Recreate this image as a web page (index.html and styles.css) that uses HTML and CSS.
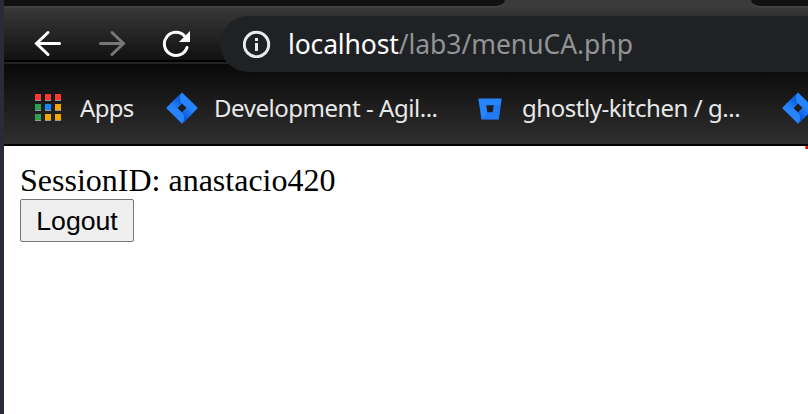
FILE: index.html
```html
<!DOCTYPE html>
<html lang="en">
<head>
<meta charset="utf-8">
<title>localhost/lab3/menuCA.php</title>
<link rel="stylesheet" href="styles.css">
</head>
<body>
<svg class="defs" aria-hidden="true">
  <defs>
    <linearGradient id="fold-a" gradientUnits="userSpaceOnUse" x1="15" y1="8" x2="7" y2="16"><stop offset="0" stop-color="#0a5ad6"/><stop offset="1" stop-color="#2684ff"/></linearGradient>
    <linearGradient id="fold-b" gradientUnits="userSpaceOnUse" x1="17" y1="24" x2="25" y2="16"><stop offset="0" stop-color="#0a5ad6"/><stop offset="1" stop-color="#2684ff"/></linearGradient>
    <symbol id="jira" viewBox="0 0 32 32">
      <path fill="#2684ff" fill-rule="evenodd" d="M16 .4 31.2 15.2Q31.8 16 31.2 16.8L16 31.8.8 16.8Q.2 16 .8 15.2ZM16 11.4 11.4 16 16 20.6 20.6 16Z"/>
      <path fill="url(#fold-a)" d="M16 .4Q11.500 5.500 16 11.4L8.300 19 4.300 11.8Z"/>
      <path fill="url(#fold-b)" d="M16 31.800Q20.500 26 16 20.600L23.700 13 27.700 20.200Z"/>
    </symbol>
  </defs>
</svg>
<div class="window">
  <div class="tabs"><div class="tab tab-left"></div><div class="tab tab-right"></div></div>
  <div class="toolbar">
    <svg class="nav" viewBox="0 0 28 28"><path d="M25.500 13.500H2.500M14 2.500 2.500 13.500 14 24.500"/></svg>
    <svg class="nav forward" viewBox="0 0 28 28"><path d="M2.500 13.500h23M14 2.500 25.500 13.500 14 24.500"/></svg>
    <svg class="nav reload" viewBox="0 0 28 28"><path d="M22.500 6A11.600 11.600 0 1 0 25 17.500"/><path class="solid" d="M28 1v11H17Z"/></svg>
    <div class="address">
      <svg class="info" viewBox="0 0 28 28"><circle cx="13.500" cy="14.500" r="12.200"/><path d="M13.500 13v8M13.500 8v3"/></svg>
      <span class="url"><b>localhost</b>/lab3/menuCA.php</span>
    </div>
  </div>
  <div class="bookmarks">
    <div class="apps"><i class="r"></i><i class="r"></i><i class="r"></i><i class="g"></i><i class="b"></i><i class="y"></i><i class="g"></i><i class="y"></i><i class="y"></i></div>
    <span class="label label-apps">Apps</span>
    <svg class="jira"><use href="#jira"/></svg>
    <span class="label label-dev">Development - Agil...</span>
    <svg class="bucket" viewBox="0 0 24 22"><path fill="#2684ff" fill-rule="evenodd" d="M.3.5H23.700L20.700 21.500H3.500ZM8.300 7.300 9.300 14.300H14.700L15.800 7.300Z"/><path fill="#1868df" d="M15.800 7.300H22.700L20.700 21.500H4L9.300 14.300h5.400Z" opacity=".35"/></svg>
    <span class="label label-ghost">ghostly-kitchen / g...</span>
    <svg class="jira"><use href="#jira"/></svg>
  </div>
  <main class="page">
    <div class="marker"></div>
    <div class="session">SessionID: anastacio420</div>
    <button class="logout" type="button">Logout</button>
  </main>
</div>
</body>
</html>
```
FILE: styles.css
```css
* { box-sizing: border-box; }
body { margin: 0; background: #fff; overflow: hidden; }
.defs { position: absolute; width: 0; height: 0; }
.window { width: 808px; height: 414px; border-left: 4px solid #282c38; overflow: hidden; }
.tabs { height: 8px; display: flex; justify-content: space-between; background: #3b3b3b; }
.tab { height: 8px; background: #111; border-bottom: 2px solid #414141; }
.tab-left { width: 501px; border-bottom-right-radius: 10px 8px; }
.tab-right { width: 57px; border-bottom-left-radius: 10px 8px; }
.toolbar { height: 56px; display: flex; align-items: flex-start; padding: 22px 0 0 30px; background: linear-gradient(#383838, #111 52px, #000 52px 54px, #222 54px); }
.nav { width: 28px; height: 28px; margin-right: 36px; fill: none; stroke: #fff; stroke-width: 3; stroke-linecap: round; flex: none; }
.forward { stroke: #777; }
.reload { margin-right: 30px; stroke-linecap: round; }
.solid { fill: #fff; stroke: none; }
.address { width: 588px; height: 56px; flex: none; margin-top: -14px; padding-left: 23px; display: flex; align-items: center; background: #202124; border-radius: 28px 0 0 28px; position: relative; z-index: 1; }
.info { width: 28px; height: 28px; fill: none; stroke: #e8eaed; stroke-width: 3; flex: none; }
.url { margin-left: 17px; font: 26.5px/36px "Noto Sans", sans-serif; letter-spacing: -0.05px; color: #919396; white-space: nowrap; }
.url b { font-weight: 400; color: #fff; letter-spacing: -0.15px; }
.bookmarks { height: 82px; display: flex; align-items: center; padding: 8px 0 0 31px; background: linear-gradient(#090909, #2f2f2f); border-bottom: 2px solid #000; }
.apps { width: 26px; display: grid; grid-template-columns: repeat(3, 6px); gap: 3px 4px; flex: none; margin-top: -1px; }
.apps i { height: 7px; border-bottom: 1px solid #999; }
.r { background: #f9392f; }
.g { background: #2d9f50; }
.b { background: #1688f5; }
.y { background: #f2a600; }
.label { flex: none; font: 24px/34px "Noto Sans", sans-serif; letter-spacing: -0.46px; color: #e8e8e8; white-space: nowrap; }
.label-apps { width: 86px; margin-left: 19px; letter-spacing: -0.7px; }
.jira { width: 32px; height: 32px; flex: none; }
.label-dev { width: 264px; margin-left: 16px; }
.bucket { width: 24px; height: 22px; flex: none; margin-top: 1px; }
.label-ghost { width: 260px; margin-left: 20px; }
.page { height: 268px; padding: 16px; background: #fff; position: relative; }
.marker { position: absolute; right: 0; top: 0; width: 3px; height: 3px; background: #f00; border-radius: 2px 0 0 2px; }
.session { font: 32px/37px "Liberation Serif", serif; color: #000; }
.logout { display: block; width: 114px; height: 43px; padding: 0; border: 1px solid #767676; border-radius: 2px; background: #efefef; color: #000; font: 26.67px/38px "Liberation Sans", sans-serif; }
```
